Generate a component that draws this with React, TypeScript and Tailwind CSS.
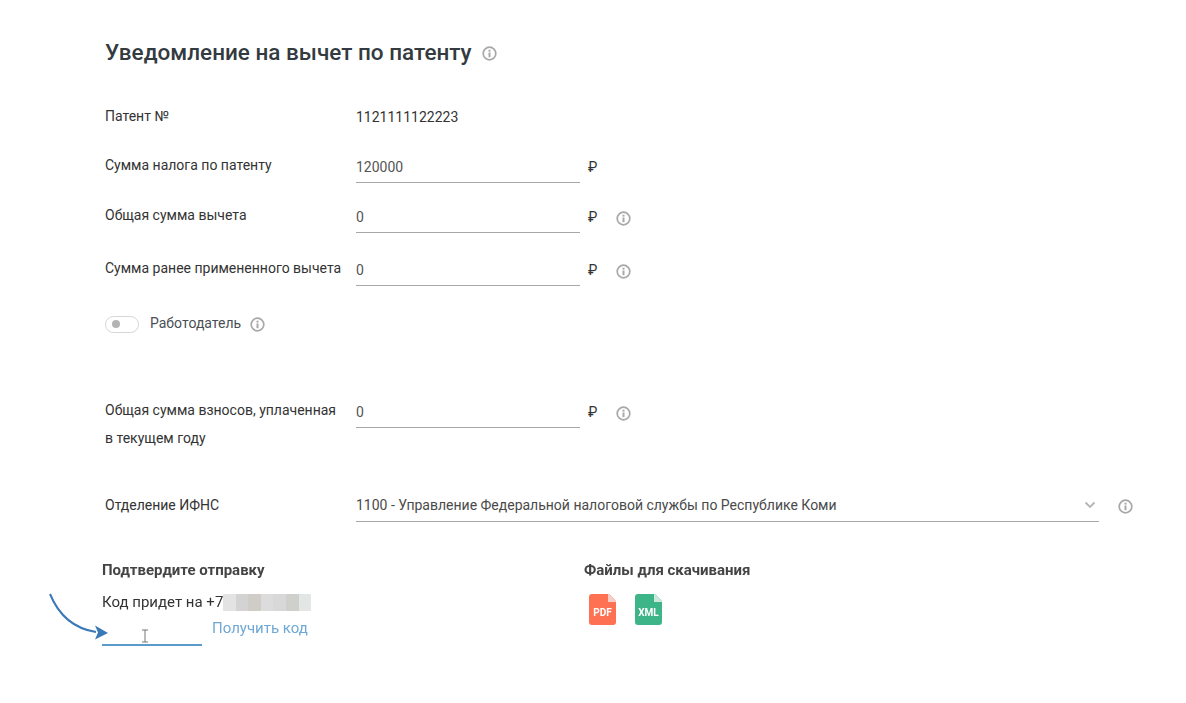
import type { ReactNode } from "react";

function InfoIcon({ className = "" }: { className?: string }) {
    return (
        <svg className={`shrink-0 ${className}`} width="15" height="15" viewBox="0 0 15 15" fill="none">
            <circle cx="7.5" cy="7.5" r="6.3" stroke="#a8a8a8" strokeWidth="1.7" />
            <rect x="6.5" y="6.5" width="2" height="4.7" fill="#a8a8a8" />
            <rect x="6.5" y="3.7" width="2" height="1.9" fill="#a8a8a8" />
        </svg>
    );
}

function Field({ label, value, top, info = true }: { label: ReactNode; value: string; top: string; info?: boolean }) {
    return (
        <div className={`flex items-start ml-[105px] ${top}`}>
            <div className="w-[251px] shrink-0 text-[14px] leading-[28px] text-[#333] -mt-[1px]">{label}</div>
            <div className="w-[224px] h-[31px] border-b border-[#a8a8a8] text-[14px] leading-[30px] text-[#555]">{value}</div>
            <span className="ml-[8px] w-[18px] text-[14px] leading-[30px] text-[#333]">₽</span>
            {info && <InfoIcon className="ml-[10px] mt-[9px]" />}
        </div>
    );
}

function FileIcon({ color, fold, label }: { color: string; fold: string; label: string }) {
    return (
        <svg width="27" height="31" viewBox="0 0 27 31">
            <path d="M3 0h17l7 7v21a3 3 0 0 1-3 3H3a3 3 0 0 1-3-3V3a3 3 0 0 1 3-3z" fill={color} />
            <path d="M19 0h1l7 7v1h-8z" fill={fold} />
            <text x="13.5" y="22" textAnchor="middle" fontSize="10" fontWeight="700" fill="#fff" fontFamily="Roboto, sans-serif">{label}</text>
        </svg>
    );
}

export default function App() {
    const mosaic = ["#e3e3e3", "#d3d3d3", "#d0ccc8", "#dcdcdc", "#d8d8d8", "#cfd0cc", "#e2e7e5"];

    return (
        <div className="w-[1186px] h-[703px] bg-white overflow-hidden font-['Roboto',sans-serif]">
            <div className="flex items-center ml-[105px] pt-[36px] h-[67px]">
                <h1 className="text-[22.5px] leading-[30px] font-medium text-[#333a40]">Уведомление на вычет по патенту</h1>
                <InfoIcon className="ml-[10px] mt-[3px]" />
            </div>

            <div className="flex items-center ml-[105px] mt-[34px] h-[30px]">
                <div className="w-[251px] text-[14px] text-[#333]">Патент №</div>
                <div className="text-[14px] text-[#333] mt-[2px]">1121111122223</div>
            </div>

            <Field label="Сумма налога по патенту" value="120000" top="mt-[21px]" info={false} />
            <Field label="Общая сумма вычета" value="0" top="mt-[19px]" />
            <Field label="Сумма ранее примененного вычета" value="0" top="mt-[22px]" />

            <div className="flex items-center ml-[105px] mt-[28px] h-[20px]">
                <div className="w-[34px] h-[17px] rounded-full border border-[#d6d6d6] flex items-center pl-[6px]">
                    <div className="w-[8px] h-[8px] rounded-full bg-[#b4b4b4]" />
                </div>
                <span className="ml-[11px] text-[14px] text-[#4a4f55] -mt-[1px]">Работодатель</span>
                <InfoIcon className="ml-[9px]" />
            </div>

            <Field
                label={<>Общая сумма взносов, уплаченная<br />в текущем году</>}
                value="0"
                top="mt-[63px]"
            />

            <div className="flex items-start ml-[105px] mt-[39px]">
                <div className="w-[251px] shrink-0 text-[14px] leading-[28px] text-[#333]">Отделение ИФНС</div>
                <div className="w-[743px] h-[31px] border-b border-[#a8a8a8] flex items-center justify-between pr-[3px] pb-[2px]">
                    <span className="text-[14px] text-[#4a4a4a]">1100 - Управление Федеральной налоговой службы по Республике Коми</span>
                    <svg width="12" height="8" viewBox="0 0 12 8" fill="none">
                        <path d="M1.5 1.5 6 6l4.5-4.5" stroke="#b5b5b5" strokeWidth="1.8" />
                    </svg>
                </div>
                <InfoIcon className="ml-[19px] mt-[8px]" />
            </div>

            <div className="relative flex mt-[38px] ml-[102px] blur-[0.3px]">
                <svg className="absolute -left-[54px] top-[32px]" width="62" height="50" viewBox="0 0 62 50" fill="none">
                    <path d="M2 2C9 19 22 36 48 40" stroke="#3a78b8" strokeWidth="2" />
                    <path d="M60 41 47 33.5l3 7-3 7z" fill="#3a78b8" />
                </svg>

                <div className="w-[482px]">
                    <div className="text-[15px] leading-[20px] font-bold text-[#444]">Подтвердите отправку</div>
                    <div className="flex items-center mt-[12px] h-[20px]">
                        <span className="text-[15px] text-[#333] w-[121px] shrink-0 whitespace-nowrap">Код придет на +79</span>
                        <div className="relative flex h-[17px]">
                            {mosaic.map((c, i) => (
                                <div key={i} className="w-[12.6px]" style={{ backgroundColor: c }} />
                            ))}
                        </div>
                    </div>
                    <div className="flex items-start mt-[6px]">
                        <div className="relative w-[100px] h-[28px] border-b-2 border-[#5b9bc9]">
                            <svg className="absolute left-[39px] top-[11px]" width="8" height="14" viewBox="0 0 8 14" fill="none">
                                <path d="M1 1h6M4 1v12M1 13h6" stroke="#777" strokeWidth="1" />
                            </svg>
                        </div>
                        <span className="ml-[10px] -mt-[2px] text-[15px] leading-[24px] text-[#6fa8d6]">Получить код</span>
                    </div>
                </div>

                <div>
                    <div className="text-[15px] leading-[20px] font-bold text-[#444]">Файлы для скачивания</div>
                    <div className="flex gap-[19px] mt-[14px] ml-[5px]">
                        <FileIcon color="#fe7153" fold="#f3cfc6" label="PDF" />
                        <FileIcon color="#3eb489" fold="#cce8dc" label="XML" />
                    </div>
                </div>
            </div>
        </div>
    );
}
